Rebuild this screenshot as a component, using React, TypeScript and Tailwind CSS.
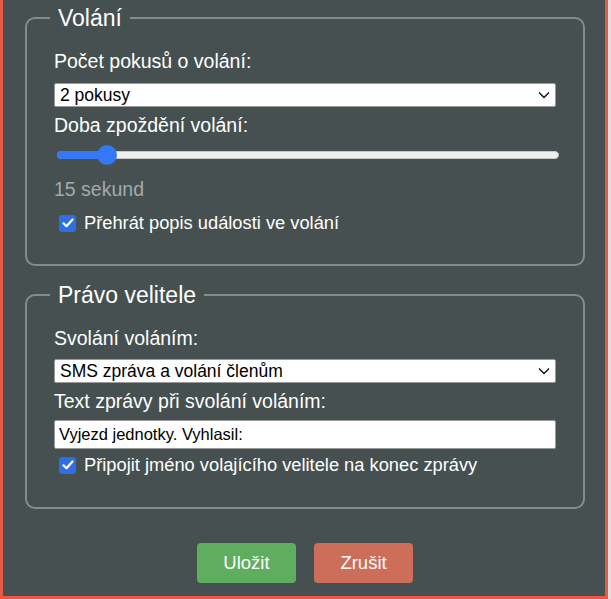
import React, { useState } from 'react';

const font = { fontFamily: '"Liberation Sans", Arial, sans-serif' };

const Chevron = () => (
  <svg width="12" height="8" viewBox="0 0 12 8" className="pointer-events-none absolute right-[6px] top-1/2 -translate-y-1/2">
    <path d="M1 1.5 L6 6.5 L11 1.5" fill="none" stroke="#111" strokeWidth="1.4" />
  </svg>
);

const Select = ({ value, options, onChange }: { value: string; options: string[]; onChange: (v: string) => void }) => (
  <div className="relative">
    <select
      value={value}
      onChange={e => onChange(e.target.value)}
      className="block h-[24px] w-full appearance-none rounded-[2px] border border-[#9a9a9a] bg-white pl-[5px] pr-6 text-[17.5px] leading-[22px] text-black outline-none"
    >
      {options.map(o => (
        <option key={o} value={o}>{o}</option>
      ))}
    </select>
    <Chevron />
  </div>
);

const Checkbox = ({ checked, onChange, label }: { checked: boolean; onChange: () => void; label: string }) => (
  <label className="flex h-[22px] cursor-pointer items-center gap-[8px] pl-[5px] text-[18.3px] text-white">
    <span
      onClick={onChange}
      className={`flex h-[17px] w-[17px] shrink-0 items-center justify-center rounded-[3px] ${checked ? 'bg-[#2f6fe6]' : 'border border-gray-400 bg-white'}`}
    >
      {checked && (
        <svg width="12" height="10" viewBox="0 0 12 10">
          <path d="M1.5 5.2 L4.5 8.2 L10.5 1.5" fill="none" stroke="#fff" strokeWidth="2.2" strokeLinecap="round" strokeLinejoin="round" />
        </svg>
      )}
    </span>
    {label}
  </label>
);

// range control drawn by hand so it looks the same everywhere
const Slider = ({ value, min, max }: { value: number; min: number; max: number }) => {
  const pct = ((value - min) / (max - min)) * 100;
  return (
    <div className="relative ml-[3px] mr-[-3px] h-[21px]">
      <div className="absolute inset-x-0 top-1/2 h-[8px] -translate-y-1/2 rounded-full border border-[#c8c8c8] bg-[#efefef]" />
      <div className="absolute left-0 top-1/2 h-[8px] -translate-y-1/2 rounded-full bg-[#3478f6]" style={{ width: `${pct}%` }} />
      <div
        className="absolute top-1/2 h-[20px] w-[20px] -translate-x-1/2 -translate-y-1/2 rounded-full bg-[#3478f6]"
        style={{ left: `${pct}%` }}
      />
    </div>
  );
};

const Fieldset = ({ title, children, className = '' }: { title: string; children: React.ReactNode; className?: string }) => (
  <fieldset className={`rounded-[10px] border-2 border-[#878b8b] px-[27px] ${className}`}>
    <legend className="ml-[-4px] px-[8px] text-[23px] leading-[26px] text-white">{title}</legend>
    {children}
  </fieldset>
);

export default function App() {
  const [attempts, setAttempts] = useState('2 pokusy');
  const [replay, setReplay] = useState(true);
  const [mode, setMode] = useState('SMS zpráva a volání členům');
  const [message, setMessage] = useState('Vyjezd jednotky. Vyhlasil:');
  const [appendName, setAppendName] = useState(true);

  return (
    <div className="min-h-screen bg-[#dedede]" style={font}>
      <div className="w-[608px] border-x-[3px] border-b-[3px] border-[#e85a47] bg-[#465050] pl-[22px] pr-[20px] pt-[5px] pb-[13px]">
        <Fieldset title="Volání" className="pt-[19px] pb-[30px]">
          <div className="text-[19.5px] leading-[22px] text-white">Počet pokusů o volání:</div>
          <div className="mt-[11px]">
            <Select value={attempts} options={['1 pokus', '2 pokusy', '3 pokusy']} onChange={setAttempts} />
          </div>
          <div className="mt-[7px] text-[19.5px] leading-[22px] text-white">Doba zpoždění volání:</div>
          <div className="mt-[8px]">
            <Slider value={15} min={5} max={105} />
          </div>
          <div className="mt-[13px] text-[19.5px] leading-[22px] text-[#a6a9a9]">15 sekund</div>
          <div className="mt-[12px]">
            <Checkbox checked={replay} onChange={() => setReplay(!replay)} label="Přehrát popis události ve volání" />
          </div>
        </Fieldset>

        <Fieldset title="Právo velitele" className="mt-[16px] pt-[19px] pb-[31px]">
          <div className="text-[19.5px] leading-[22px] text-white">Svolání voláním:</div>
          <div className="mt-[10px]">
            <Select value={mode} options={['Pouze SMS zpráva', 'SMS zpráva a volání členům']} onChange={setMode} />
          </div>
          <div className="mt-[7px] text-[19.5px] leading-[22px] text-white">Text zprávy při svolání voláním:</div>
          <div className="mt-[8px]">
            <input
              value={message}
              onChange={e => setMessage(e.target.value)}
              className="block h-[29px] w-full rounded-[2px] border border-[#9a9a9a] bg-white px-[4px] text-[16.5px] text-black outline-none"
            />
          </div>
          <div className="mt-[5px]">
            <Checkbox checked={appendName} onChange={() => setAppendName(!appendName)} label="Připojit jméno volajícího velitele na konec zprávy" />
          </div>
        </Fieldset>

        <div className="mt-[34px] flex justify-center gap-[18px]">
          <button className="h-[40px] w-[99px] rounded-[4px] bg-[#5fad5f] text-[18.5px] text-white">Uložit</button>
          <button className="h-[40px] w-[99px] rounded-[4px] bg-[#cc6e5a] text-[18.5px] text-white">Zrušit</button>
        </div>
      </div>
    </div>
  );
}
